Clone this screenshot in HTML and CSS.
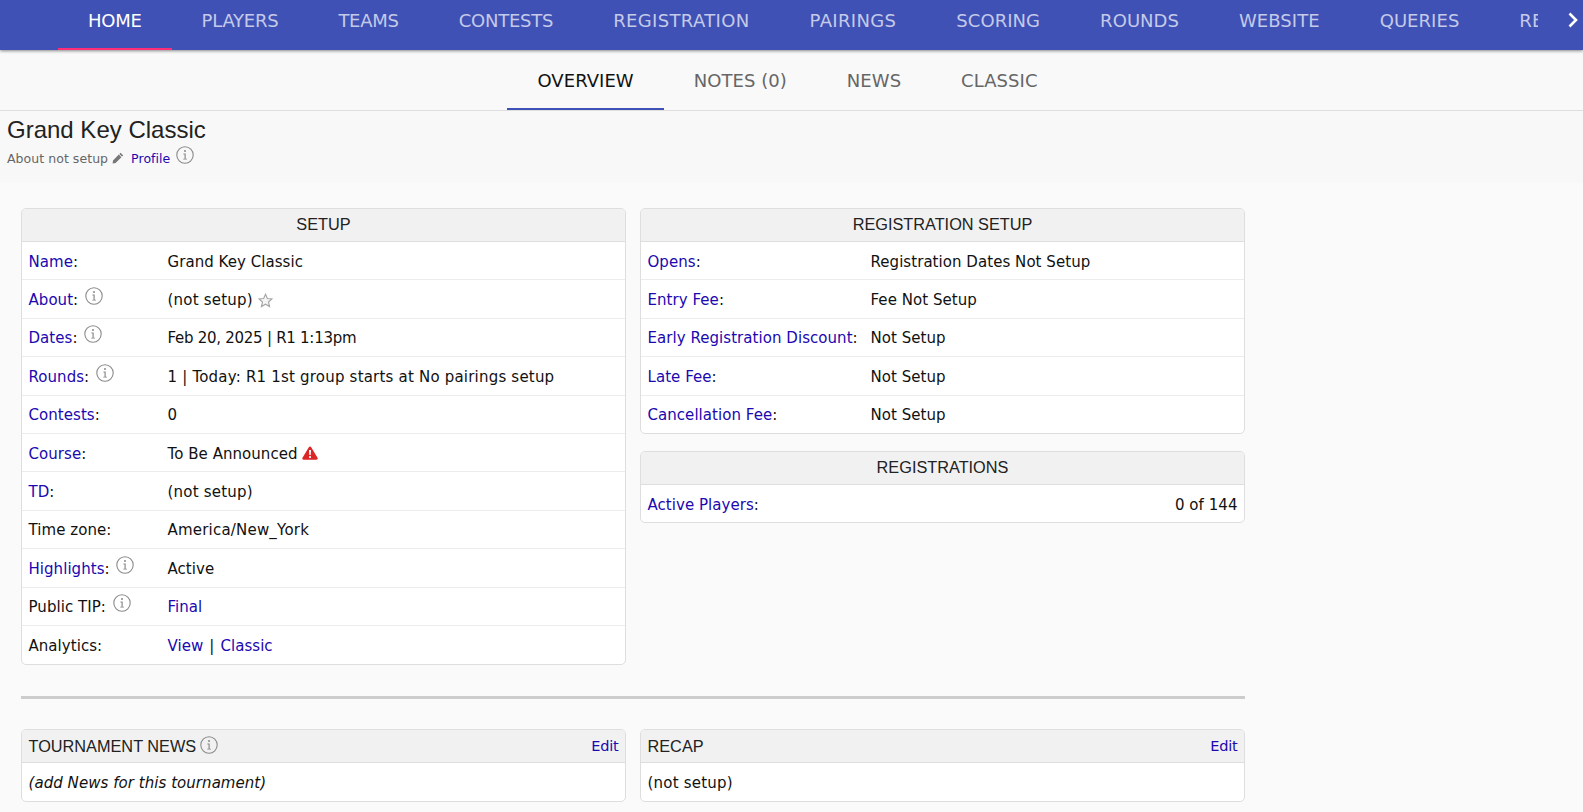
FILE: index.html
```html
<!DOCTYPE html>
<html lang="en">
<head>
<meta charset="utf-8">
<title>Grand Key Classic</title>
<link rel="stylesheet" href="styles.css">
</head>
<body>
<svg class="defs" width="0" height="0" aria-hidden="true">
  <symbol id="info" viewBox="0 0 18 18">
    <circle cx="9" cy="9" r="8.2" fill="none" stroke="#8a8a8a" stroke-width="1.1"/>
    <circle cx="9" cy="4.9" r="1" fill="#8a8a8a"/>
    <path d="M7.4 7.6H9.7V12.8H11V13.6H7.2V12.8H8.5V8.4H7.4Z" fill="#8a8a8a"/>
  </symbol>
</svg>
<header class="topbar">
  <nav class="mainnav">
    <a class="navitem active tight">HOME</a>
    <a class="navitem tight">PLAYERS</a>
    <a class="navitem tight">TEAMS</a>
    <a class="navitem tight">CONTESTS</a>
    <a class="navitem loose">REGISTRATION</a>
    <a class="navitem loose">PAIRINGS</a>
    <a class="navitem">SCORING</a>
    <a class="navitem">ROUNDS</a>
    <a class="navitem">WEBSITE</a>
    <a class="navitem">QUERIES</a>
    <a class="navitem">REPORTS</a>
  </nav>
  <svg class="chevron" width="11" height="16" viewBox="0 0 11 16"><path d="M1.5 1.5 8 8 1.5 14.5" fill="none" stroke="#fff" stroke-width="2.6"/></svg>
</header>
<div class="subtabs">
  <a class="subtab active">OVERVIEW</a>
  <a class="subtab">NOTES (0)</a>
  <a class="subtab">NEWS</a>
  <a class="subtab">CLASSIC</a>
</div>
<section class="intro">
  <h1 class="title">Grand Key Classic</h1>
  <div class="about">
    <span>About not setup</span>
    <svg class="pencil" width="12" height="12" viewBox="0 0 12 12"><path d="M8.6.8 11.2 3.4 10 4.6 7.4 2ZM6.8 2.6 9.4 5.2 3.6 11 .6 11.5 1 8.4Z" fill="#777"/></svg>
    <a class="link profile">Profile</a>
    <svg class="info info-head"><use href="#info"/></svg>
  </div>
</section>
<main class="content">
  <div class="columns">
    <div class="panel">
      <h2 class="panel-head center">SETUP</h2>
      <div class="row"><span class="label"><a class="link">Name</a>:</span><span>Grand Key Classic</span></div>
      <div class="row"><span class="label"><a class="link">About</a>: <svg class="info"><use href="#info"/></svg></span><span><span class="spaced">(not setup)</span> <svg class="star" width="15" height="15" viewBox="0 0 16 16"><path d="M8 1.4 10 5.9 14.9 6.4 11.2 9.6 12.3 14.4 8 11.9 3.7 14.4 4.8 9.6 1.1 6.4 6 5.9Z" fill="#f4f4f4" stroke="#a5a5a5" stroke-width="1.2"/></svg></span></div>
      <div class="row"><span class="label"><a class="link">Dates</a>: <svg class="info"><use href="#info"/></svg></span><span class="numeric">Feb 20, 2025 | R1 1:13pm</span></div>
      <div class="row"><span class="label"><a class="link">Rounds</a>: <svg class="info"><use href="#info"/></svg></span><span class="spaced">1 | Today: R1 1st group starts at No pairings setup</span></div>
      <div class="row"><span class="label"><a class="link">Contests</a>:</span><span>0</span></div>
      <div class="row"><span class="label"><a class="link">Course</a>:</span><span>To Be Announced <svg class="warn" width="16" height="14" viewBox="0 0 16 14"><path d="M8 .4C8.5.4 8.9.7 9.2 1.2L15.5 11.8C16.1 12.8 15.5 13.8 14.4 13.8H1.6C.5 13.8-.1 12.8.5 11.8L6.8 1.2C7.1.7 7.5.4 8 .4Z" fill="#dc2626"/><path d="M7 4H9L8.7 9H7.3ZM8 10A1.1 1.1 0 1 1 8 12.2 1.1 1.1 0 1 1 8 10Z" fill="#fff"/></svg></span></div>
      <div class="row"><span class="label"><a class="link">TD</a>:</span><span class="spaced">(not setup)</span></div>
      <div class="row"><span class="label">Time zone:</span><span class="spaced">America/New_York</span></div>
      <div class="row"><span class="label"><a class="link">Highlights</a>: <svg class="info"><use href="#info"/></svg></span><span>Active</span></div>
      <div class="row"><span class="label">Public TIP: <svg class="info"><use href="#info"/></svg></span><a class="link">Final</a></div>
      <div class="row"><span class="label">Analytics:</span><span class="links"><a class="link">View</a> | <a class="link">Classic</a></span></div>
    </div>
    <div class="stack">
      <div class="panel wide-label">
        <h2 class="panel-head center">REGISTRATION SETUP</h2>
        <div class="row"><span class="label"><a class="link">Opens</a>:</span><span>Registration Dates Not Setup</span></div>
        <div class="row"><span class="label"><a class="link">Entry Fee</a>:</span><span>Fee Not Setup</span></div>
        <div class="row"><span class="label"><a class="link">Early Registration Discount</a>:</span><span>Not Setup</span></div>
        <div class="row"><span class="label"><a class="link">Late Fee</a>:</span><span>Not Setup</span></div>
        <div class="row short"><span class="label"><a class="link">Cancellation Fee</a>:</span><span>Not Setup</span></div>
      </div>
      <div class="panel">
        <h2 class="panel-head center">REGISTRATIONS</h2>
        <div class="row spread"><span><a class="link">Active Players</a>:</span><span>0 of 144</span></div>
      </div>
    </div>
  </div>
  <hr class="divider">
  <div class="columns">
    <div class="panel">
      <h2 class="panel-head split"><span class="head-title">TOURNAMENT NEWS <svg class="info"><use href="#info"/></svg></span><a class="link edit">Edit</a></h2>
      <div class="row short"><em>(add News for this tournament)</em></div>
    </div>
    <div class="panel">
      <h2 class="panel-head split"><span class="head-title">RECAP</span><a class="link edit">Edit</a></h2>
      <div class="row short"><span class="spaced">(not setup)</span></div>
    </div>
  </div>
</main>
</body>
</html>
```
FILE: styles.css
```css
* { box-sizing: border-box; }
html, body { margin: 0; padding: 0; }
body {
  background: #fafafa;
  color: #111;
  font-family: "DejaVu Sans", sans-serif;
  font-size: 15px;
  letter-spacing: .05px;
  height: 812px;
  overflow: hidden;
}
.defs { position: absolute; }
.topbar {
  display: flex;
  height: 50px;
  background: #3f51b5;
  box-shadow: 0 1px 3px rgba(0, 0, 0, .45);
  position: relative;
}
.mainnav {
  display: flex;
  margin-left: 58px;
  width: 1480px;
  overflow: hidden;
}
.navitem {
  flex: none;
  padding: 0 30px;
  height: 50px;
  line-height: 42px;
  color: #c5cae9;
  font-size: 18px;
  border-bottom: 2px solid transparent;
}
.navitem.tight { letter-spacing: -.25px; }
.navitem.loose { letter-spacing: .35px; }
.navitem.active { color: #fff; border-bottom-color: #ff2d78; }
.chevron { margin: 12px 0 0 30px; }
.subtabs {
  display: flex;
  justify-content: center;
  height: 61px;
  padding-right: 8px;
  background: #f9f9f9;
  border-bottom: 1px solid #dedede;
}
.subtab {
  padding: 0 30px;
  height: 60px;
  line-height: 61px;
  color: #666;
  font-size: 18px;
}
.subtab.active { color: #111; border-bottom: 2px solid #3f51b5; }
.intro { height: 72px; padding: 5px 7px 0; background: #f8f8f8; }
.title {
  margin: 0;
  font: 400 24px/28px "Liberation Sans", sans-serif;
  letter-spacing: 0;
  color: #222;
}
.about {
  display: flex;
  align-items: center;
  font-size: 12.5px;
  color: #666;
  height: 24px;
  padding-top: 4px;
}
.pencil { margin-left: 4px; }
.profile { margin-left: 7px; }
.link { color: #2008b0; }
.content { width: 1224px; margin-left: 21px; padding-top: 25px; }
.columns {
  display: grid;
  grid-template-columns: 605px 605px;
  column-gap: 14px;
  align-items: start;
}
.stack { display: flex; flex-direction: column; gap: 17px; }
.panel {
  background: #fff;
  border: 1px solid #dedee0;
  border-radius: 5px;
  overflow: hidden;
}
.panel-head {
  margin: 0;
  height: 33px;
  background: #f1f1f1;
  border-bottom: 1px solid #dedee0;
  font: 400 16.3px/31px "Liberation Sans", sans-serif;
  letter-spacing: 0;
  color: #222;
  padding: 0 6.5px;
}
.center { text-align: center; }
.split { display: flex; justify-content: space-between; align-items: center; }
.head-title { display: flex; align-items: center; gap: 2px; }
.edit { font-size: 14.5px; font-family: "DejaVu Sans", sans-serif; letter-spacing: -.2px; }
.row {
  display: flex;
  align-items: center;
  height: 38.4px;
  padding: 2px 6.5px 0;
  border-bottom: 1px solid #ececec;
}
.row:last-child { border-bottom: 0; }
.row.short { height: 37.5px; }
.label { flex: none; width: 139px; }
.wide-label .label { width: 223px; }
.spread { justify-content: space-between; height: 37px; }
.numeric { letter-spacing: -.27px; }
.spaced { letter-spacing: .2px; }
.links { word-spacing: 1.2px; }
.info { width: 18px; height: 18px; vertical-align: 3px; margin: -6px 0 -3px 2px; }
.about .info-head { margin: 0 0 7px 6px; }
.star { vertical-align: -3px; }
.warn { vertical-align: -1px; }
.divider {
  height: 3px;
  border: 0;
  background: #ccc;
  margin: 31px 0 30px;
}
```
